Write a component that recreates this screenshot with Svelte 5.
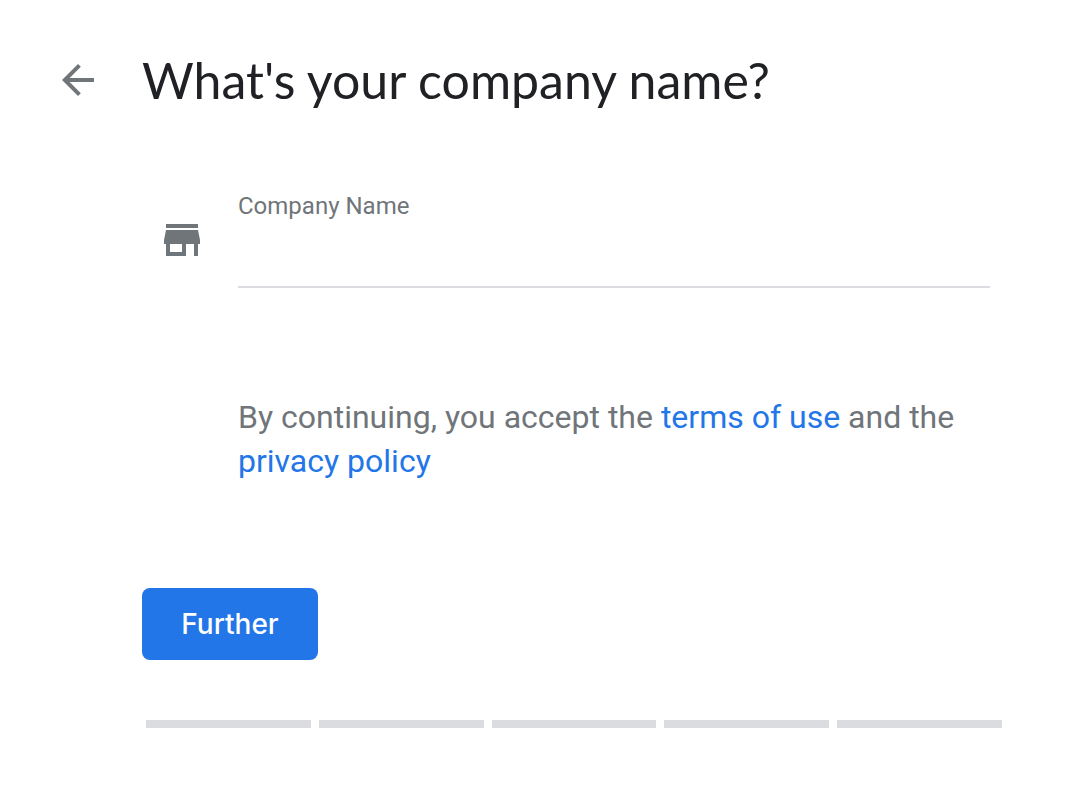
<script>
  let company = $state('');
  const steps = [1, 2, 3, 4, 5];
</script>

<main>
  <header>
    <button class="back" type="button" aria-label="Back">
      <svg viewBox="4 4 16 16" width="32" height="32" aria-hidden="true"><path d="M20 11H7.83l5.59-5.59L12 4l-8 8 8 8 1.41-1.41L7.83 13H20v-2z" /></svg>
    </button>
    <h1>What's your company name?</h1>
  </header>

  <form onsubmit={(e) => e.preventDefault()}>
    <div class="row">
      <svg class="store" viewBox="3 4 18 16" width="36" height="32" aria-hidden="true"><path d="M20 4H4v2h16V4zm1 10v-2l-1-5H4l-1 5v2h1v6h10v-6h4v6h2v-6h1zm-9 4H6v-4h6v4z" /></svg>
      <div class="field">
        <label for="company">Company Name</label>
        <input id="company" type="text" bind:value={company} />
      </div>
    </div>
    <p>By continuing, you accept the <a href="#terms">terms of use</a> and the <a href="#privacy">privacy policy</a></p>
    <button class="next" type="submit">Further</button>
  </form>

  <div class="steps">
    {#each steps as step (step)}
      <span></span>
    {/each}
  </div>
</main>

<style>
  :global(body) {
    margin: 0;
    background: #fff;
  }
  main {
    padding: 48px 90px 76px 62px;
    font-family: Roboto, sans-serif;
    color: #70757a;
  }
  header {
    display: flex;
    align-items: center;
    gap: 48px;
  }
  .back {
    display: flex;
    padding: 0;
    border: 0;
    background: none;
    cursor: pointer;
  }
  svg {
    flex: none;
    fill: #70757a;
  }
  h1 {
    margin: 0;
    font: 400 50px/64px "Google Sans", "Product Sans", Lato, sans-serif;
    color: #202124;
  }
  form {
    padding: 80px 12px 0 80px;
  }
  .row {
    display: flex;
    align-items: flex-start;
    gap: 38px;
    padding-left: 22px;
  }
  .store {
    margin-top: 32px;
  }
  .field {
    flex: 1;
    display: flex;
    flex-direction: column;
  }
  label {
    font-size: 24px;
    line-height: 28px;
  }
  input {
    height: 68px;
    box-sizing: border-box;
    padding: 0;
    border: 0;
    border-bottom: 2px solid #dadce0;
    outline: 0;
    background: none;
    font: 32px Roboto, sans-serif;
    color: #202124;
  }
  p {
    margin: 107px 0 0 96px;
    font-size: 32px;
    line-height: 44px;
  }
  a {
    color: #2276e8;
    text-decoration: none;
  }
  .next {
    display: block;
    min-width: 176px;
    height: 72px;
    margin-top: 105px;
    padding: 0 32px;
    border: 0;
    border-radius: 8px;
    background: #2276e8;
    color: #fff;
    font: 500 28px "Google Sans", Inter, sans-serif;
    cursor: pointer;
  }
  .steps {
    display: flex;
    gap: 8px;
    margin: 60px 0 0 84px;
  }
  .steps span {
    flex: 1;
    height: 8px;
    background: #dadce0;
  }
</style>
